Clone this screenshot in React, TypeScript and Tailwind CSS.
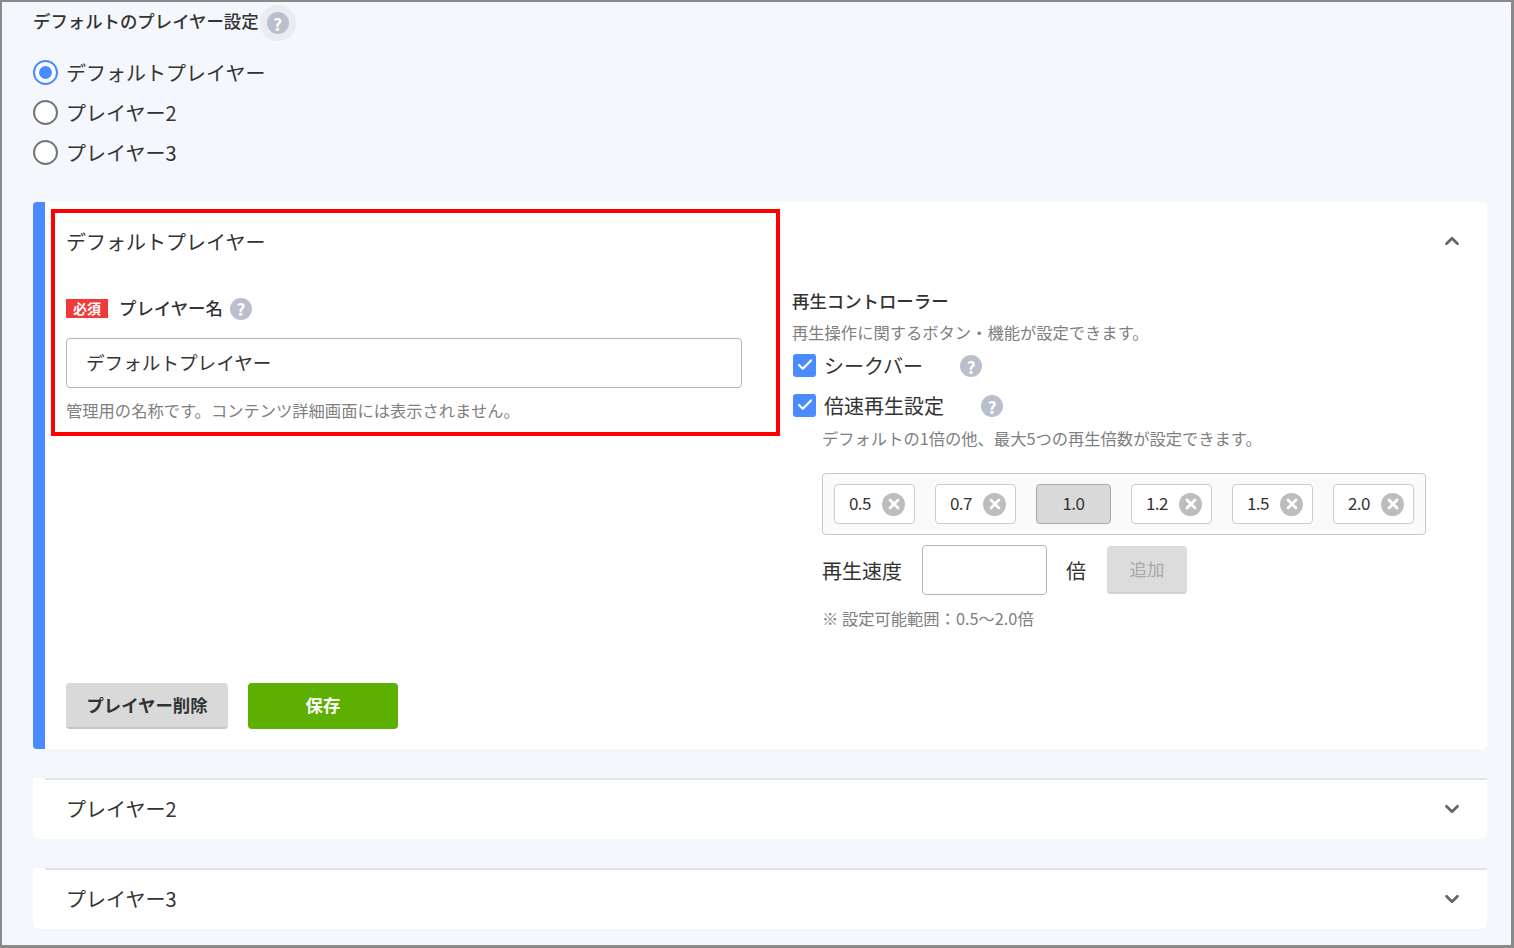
import { ChevronDown, ChevronUp, Check, X } from "lucide-react";

const speeds = ["0.5", "0.7", "1.0", "1.2", "1.5", "2.0"];

function Help({ className = "" }: { className?: string }) {
  return (
    <span
      className={`flex h-[22px] w-[22px] shrink-0 items-center justify-center rounded-full bg-[#b9c0cc] text-[17px] leading-none font-bold text-white ${className}`}
    >
      ?
    </span>
  );
}

function Radio({ label, checked }: { label: string; checked?: boolean }) {
  return (
    <div className="flex h-10 items-center gap-2">
      <span
        className={`flex h-[25px] w-[25px] items-center justify-center rounded-full border-2 bg-white ${
          checked ? "border-[#4a8bff]" : "border-[#757575]"
        }`}
      >
        {checked && <span className="h-[13px] w-[13px] rounded-full bg-[#4a8bff]" />}
      </span>
      <span className="pt-[1px] text-[20px] leading-none text-[#333]">{label}</span>
    </div>
  );
}

function CheckRow({ label, helpGap }: { label: string; helpGap: string }) {
  return (
    <div className="flex h-10 items-center">
      <span className="flex h-[23px] w-[23px] items-center justify-center rounded-[3px] bg-[#4a8bff]">
        <Check size={18} strokeWidth={3} className="text-white" />
      </span>
      <span className="ml-2 pt-[2px] text-[20px] leading-none text-[#333]">{label}</span>
      <Help className={`mt-[2px] ${helpGap}`} />
    </div>
  );
}

function Chip({ value }: { value: string }) {
  if (value === "1.0") {
    return (
      <div className="flex h-10 w-[75px] items-center justify-center rounded-[4px] border border-[#aaa] bg-[#d9d9d9] pb-[2px] text-[17px] tracking-[-0.5px] text-[#333]">
        {value}
      </div>
    );
  }
  return (
    <div className="flex h-10 w-[81px] items-center justify-end gap-[11px] rounded-[4px] border border-[#ccc] bg-white pr-[9px] text-[17px] tracking-[-0.5px] text-[#333]">
      <span className="mb-[2px]">{value}</span>
      <span className="flex h-[23px] w-[23px] items-center justify-center rounded-full bg-[#bdbdbd]">
        <X size={16} strokeWidth={4} className="text-white" />
      </span>
    </div>
  );
}

function Collapsed({ label }: { label: string }) {
  return (
    <section className="rounded-b-[6px] bg-white">
      <div className="ml-3 flex h-[61px] items-center justify-between border-t-2 border-[#e0e4ea] pr-[24px] pb-[2px] pl-[21px]">
        <span className="text-[20px] leading-none text-[#333]">{label}</span>
        <ChevronDown size={22} strokeWidth={3} className="text-[#666]" />
      </div>
    </section>
  );
}

export default function App() {
  return (
    <div
      className="relative h-[948px] w-[1514px] overflow-hidden border-2 border-r-[3px] border-b-[3px] border-[#8a8a8a] bg-[#f4f7fc] pt-[8px] pl-[31px]"
      style={{ fontFamily: '"Noto Sans CJK JP", "Noto Sans", sans-serif' }}
    >
      <div className="flex h-[26px] items-center">
        <h2 className="mb-[4px] text-[17.4px] leading-none font-medium text-[#333]">デフォルトのプレイヤー設定</h2>
        <span className="ml-[1px] flex h-9 w-9 items-center justify-center rounded-full bg-[#e9ecf1]">
          <Help />
        </span>
      </div>

      <div className="mt-[16px] flex flex-col">
        <Radio label="デフォルトプレイヤー" checked />
        <Radio label="プレイヤー2" />
        <Radio label="プレイヤー3" />
      </div>

      <div className="mt-[30px] flex w-[1454px] flex-col gap-[29px]">
        <section className="flex h-[547px] rounded-[4px] bg-white">
          <div className="w-3 shrink-0 rounded-l-[4px] bg-[#4a8bff]" />
          <div className="flex flex-1 flex-col pr-[24px] pb-[20px] pl-[21px]">
            <div className="flex h-20 items-center justify-between">
              <span className="text-[20px] leading-none text-[#333]">デフォルトプレイヤー</span>
              <ChevronUp size={22} strokeWidth={3} className="mb-[2px] text-[#666]" />
            </div>

            <div className="flex flex-1 gap-[50px]">
              <div className="w-[676px] shrink-0">
                <div className="mt-[15px] flex h-[22px] items-center">
                  <span className="flex h-[19px] w-[42px] items-center justify-center bg-[#f03a3a] text-[14px] leading-none font-bold text-white">
                    必須
                  </span>
                  <span className="mb-[1px] ml-[11px] text-[17.4px] leading-none font-medium text-[#333]">プレイヤー名</span>
                  <Help className="mt-[1px] ml-[7px]" />
                </div>
                <div className="mt-[19px] flex h-[50px] items-center rounded-[4px] border border-[#b5b5b5] bg-white pb-[2px] pl-[19px] text-[18.6px] text-[#333]">
                  デフォルトプレイヤー
                </div>
                <p className="mt-[12px] text-[16.3px] leading-[20px] text-[#808080]">
                  管理用の名称です。コンテンツ詳細画面には表示されません。
                </p>
              </div>

              <div className="flex-1">
                <h3 className="mt-[8px] text-[17.4px] leading-[22px] font-medium text-[#333]">再生コントローラー</h3>
                <p className="mt-[10px] text-[16.3px] leading-[20px] text-[#808080]">
                  再生操作に関するボタン・機能が設定できます。
                </p>
                <div className="mt-[3px] ml-[1px]">
                  <CheckRow label="シークバー" helpGap="ml-[37px]" />
                  <CheckRow label="倍速再生設定" helpGap="ml-[37px]" />
                </div>
                <div className="ml-[30px] w-[604px]">
                  <p className="text-[16.3px] leading-[26px] text-[#808080]">
                    デフォルトの1倍の他、最大5つの再生倍数が設定できます。
                  </p>
                  <div className="mt-[22px] flex h-[62px] items-center gap-5 rounded-[4px] border border-[#c8c8c8] bg-[#fafafa] px-[11px]">
                    {speeds.map((s) => (
                      <Chip key={s} value={s} />
                    ))}
                  </div>
                  <div className="mt-[10px] flex h-[50px] items-center">
                    <span className="pt-[2px] text-[20px] leading-none text-[#333]">再生速度</span>
                    <div className="ml-5 h-[50px] w-[125px] rounded-[4px] border border-[#b5b5b5] bg-white" />
                    <span className="ml-[19px] pt-[2px] text-[20px] leading-none text-[#333]">倍</span>
                    <button className="ml-[21px] h-[48px] w-[80px] rounded-[4px] border-b-2 border-[#d0d0d0] bg-[#dcdcdc] text-[17.4px] text-[#a8a8a8]">
                      追加
                    </button>
                  </div>
                  <p className="mt-[13px] text-[16.3px] leading-[20px] text-[#808080]">※ 設定可能範囲：0.5〜2.0倍</p>
                </div>
              </div>
            </div>

            <div className="flex gap-5">
              <button className="h-[46px] w-[162px] rounded-[4px] border-b-2 border-[#c4c4c4] bg-[#d9d9d9] text-[17.4px] font-bold text-[#333]">
                プレイヤー削除
              </button>
              <button className="h-[46px] w-[150px] rounded-[4px] bg-[#5eb000] pb-[2px] text-[17.4px] font-bold text-white">
                保存
              </button>
            </div>
          </div>
        </section>

        <Collapsed label="プレイヤー2" />
        <Collapsed label="プレイヤー3" />
      </div>

      {/* annotation frame drawn over the screenshot */}
      <div className="pointer-events-none absolute top-[207px] left-[49px] h-[227px] w-[729px] border-4 border-[#ff0000]" />
    </div>
  );
}
